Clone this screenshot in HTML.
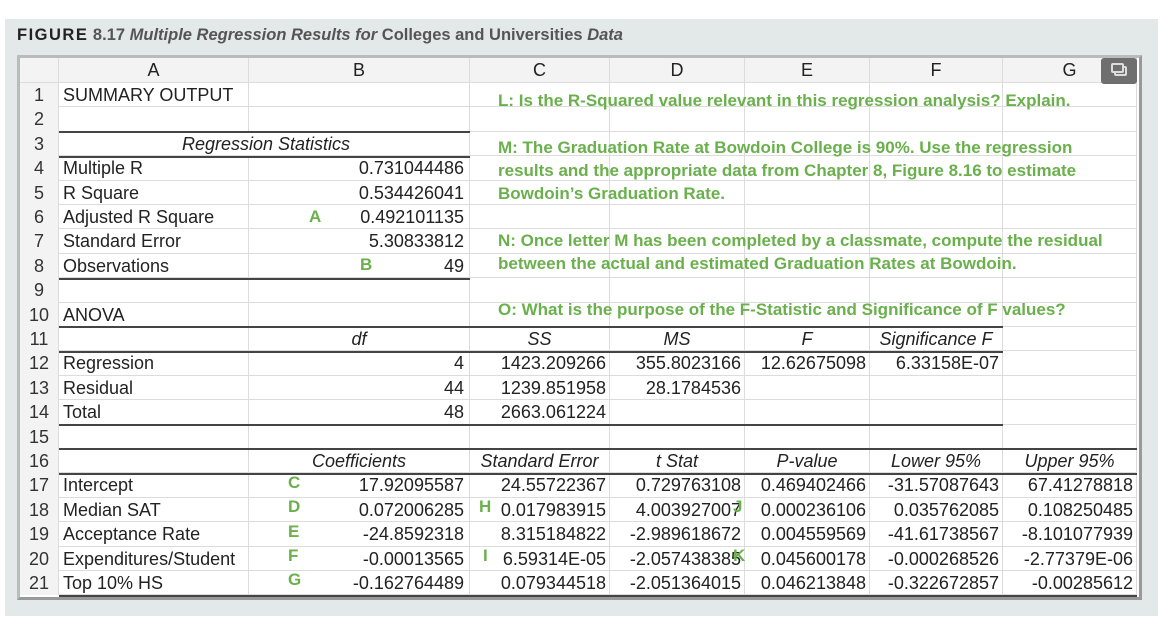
<!DOCTYPE html>
<html><head><meta charset="utf-8"><style>
*{margin:0;padding:0;box-sizing:border-box}
body{width:1170px;height:638px;background:#fff;position:relative;overflow:hidden;font-family:"Liberation Sans",Arial,sans-serif}
#panel{position:absolute;left:5px;top:19px;width:1153px;height:597px;background:#e3e9e8}
#title{position:absolute;left:17px;top:26px;font-size:16.5px;color:#555;white-space:nowrap;font-weight:bold}
#title b{color:#222;letter-spacing:1.5px}
#frame{position:absolute;left:17px;top:55px;width:1125px;height:545px;border:3px solid #bbb;border-right-color:#999;border-bottom-color:#999;background:#fff}
.grid{position:absolute;left:20px;top:58px}
.row{position:absolute;left:0;height:24.4px;width:1117px;border-bottom:1px solid #dcdcdc}
.c{position:absolute;top:0;height:24.4px;line-height:24.4px;font-size:18px;color:#222;white-space:nowrap;border-right:1px solid #dcdcdc;overflow:visible}
.n{left:0;width:39px;text-align:center;background:#f3f3f3;color:#333}
.A{left:39px;width:190px;padding-left:4px}
.B{left:229px;width:221px;padding-right:5px;text-align:right}
.C{left:450px;width:140px;padding-right:3px;text-align:right}
.D{left:590px;width:135px;padding-right:3px;text-align:right}
.E{left:725px;width:125px;padding-right:3px;text-align:right}
.F{left:850px;width:133px;padding-right:3px;text-align:right}
.G{left:983px;width:134px;padding-right:3px;text-align:right}
.hdr .c{text-align:center;background:#f3f3f3;padding:0}
.i{font-style:italic}
.ctr{text-align:center!important;padding:0!important}
.line{position:absolute;height:2px;background:#444}
.g{position:absolute;color:#6ab04c;font-weight:bold;font-size:17px;white-space:nowrap}
</style></head><body>
<div id="panel"></div>
<div id="title"><b>FIGURE</b> 8.17 <i>Multiple Regression Results for</i> Colleges and Universities <i>Data</i></div>
<div id="frame"></div>
<div class="grid">
<div class="row hdr" style="top:0;height:25px"><div class="c n" style="background:#f3f3f3"></div><div class="c A">A</div><div class="c B">B</div><div class="c C">C</div><div class="c D">D</div><div class="c E">E</div><div class="c F">F</div><div class="c G">G</div></div>
<div class="row" style="top:25px"><div class="c n">1</div><div class="c A">SUMMARY OUTPUT</div><div class="c B"></div><div class="c C"></div><div class="c D"></div><div class="c E"></div><div class="c F"></div><div class="c G"></div></div>
<div class="row" style="top:49.4px"><div class="c n">2</div><div class="c A"></div><div class="c B"></div><div class="c C"></div><div class="c D"></div><div class="c E"></div><div class="c F"></div><div class="c G"></div></div>
<div class="row" style="top:73.8px"><div class="c n">3</div><div class="c A i" style="width:411px;text-align:center;border-right:1px solid #dcdcdc">Regression Statistics</div><div class="c C"></div><div class="c D"></div><div class="c E"></div><div class="c F"></div><div class="c G"></div></div>
<div class="row" style="top:98.2px"><div class="c n">4</div><div class="c A">Multiple R</div><div class="c B">0.731044486</div><div class="c C"></div><div class="c D"></div><div class="c E"></div><div class="c F"></div><div class="c G"></div></div>
<div class="row" style="top:122.6px"><div class="c n">5</div><div class="c A">R Square</div><div class="c B">0.534426041</div><div class="c C"></div><div class="c D"></div><div class="c E"></div><div class="c F"></div><div class="c G"></div></div>
<div class="row" style="top:147px"><div class="c n">6</div><div class="c A">Adjusted R Square</div><div class="c B">0.492101135</div><div class="c C"></div><div class="c D"></div><div class="c E"></div><div class="c F"></div><div class="c G"></div></div>
<div class="row" style="top:171.4px"><div class="c n">7</div><div class="c A">Standard Error</div><div class="c B">5.30833812</div><div class="c C"></div><div class="c D"></div><div class="c E"></div><div class="c F"></div><div class="c G"></div></div>
<div class="row" style="top:195.8px"><div class="c n">8</div><div class="c A">Observations</div><div class="c B">49</div><div class="c C"></div><div class="c D"></div><div class="c E"></div><div class="c F"></div><div class="c G"></div></div>
<div class="row" style="top:220.2px"><div class="c n">9</div><div class="c A"></div><div class="c B"></div><div class="c C"></div><div class="c D"></div><div class="c E"></div><div class="c F"></div><div class="c G"></div></div>
<div class="row" style="top:244.6px"><div class="c n">10</div><div class="c A">ANOVA</div><div class="c B"></div><div class="c C"></div><div class="c D"></div><div class="c E"></div><div class="c F"></div><div class="c G"></div></div>
<div class="row" style="top:269px"><div class="c n">11</div><div class="c A"></div><div class="c B i ctr">df</div><div class="c C i ctr">SS</div><div class="c D i ctr">MS</div><div class="c E i ctr">F</div><div class="c F i ctr">Significance F</div><div class="c G"></div></div>
<div class="row" style="top:293.4px"><div class="c n">12</div><div class="c A">Regression</div><div class="c B">4</div><div class="c C">1423.209266</div><div class="c D">355.8023166</div><div class="c E">12.62675098</div><div class="c F">6.33158E-07</div><div class="c G"></div></div>
<div class="row" style="top:317.8px"><div class="c n">13</div><div class="c A">Residual</div><div class="c B">44</div><div class="c C">1239.851958</div><div class="c D">28.1784536</div><div class="c E"></div><div class="c F"></div><div class="c G"></div></div>
<div class="row" style="top:342.2px"><div class="c n">14</div><div class="c A">Total</div><div class="c B">48</div><div class="c C">2663.061224</div><div class="c D"></div><div class="c E"></div><div class="c F"></div><div class="c G"></div></div>
<div class="row" style="top:366.6px"><div class="c n">15</div><div class="c A"></div><div class="c B"></div><div class="c C"></div><div class="c D"></div><div class="c E"></div><div class="c F"></div><div class="c G"></div></div>
<div class="row" style="top:391px"><div class="c n">16</div><div class="c A"></div><div class="c B i ctr">Coefficients</div><div class="c C i ctr">Standard Error</div><div class="c D i ctr">t Stat</div><div class="c E i ctr">P-value</div><div class="c F i ctr">Lower 95%</div><div class="c G i ctr">Upper 95%</div></div>
<div class="row" style="top:415.4px"><div class="c n">17</div><div class="c A">Intercept</div><div class="c B">17.92095587</div><div class="c C">24.55722367</div><div class="c D">0.729763108</div><div class="c E">0.469402466</div><div class="c F">-31.57087643</div><div class="c G">67.41278818</div></div>
<div class="row" style="top:439.8px"><div class="c n">18</div><div class="c A">Median SAT</div><div class="c B">0.072006285</div><div class="c C">0.017983915</div><div class="c D">4.003927007</div><div class="c E">0.000236106</div><div class="c F">0.035762085</div><div class="c G">0.108250485</div></div>
<div class="row" style="top:464.2px"><div class="c n">19</div><div class="c A">Acceptance Rate</div><div class="c B">-24.8592318</div><div class="c C">8.315184822</div><div class="c D">-2.989618672</div><div class="c E">0.004559569</div><div class="c F">-41.61738567</div><div class="c G">-8.101077939</div></div>
<div class="row" style="top:488.6px"><div class="c n">20</div><div class="c A">Expenditures/Student</div><div class="c B">-0.00013565</div><div class="c C">6.59314E-05</div><div class="c D">-2.057438385</div><div class="c E">0.045600178</div><div class="c F">-0.000268526</div><div class="c G">-2.77379E-06</div></div>
<div class="row" style="top:513px"><div class="c n">21</div><div class="c A">Top 10% HS</div><div class="c B">-0.162764489</div><div class="c C">0.079344518</div><div class="c D">-2.051364015</div><div class="c E">0.046213848</div><div class="c F">-0.322672857</div><div class="c G">-0.00285612</div></div>
</div>
<div class="line" style="left:59px;width:411px;top:131px"></div>
<div class="line" style="left:59px;width:411px;top:155.5px"></div>
<div class="line" style="left:59px;width:411px;top:277.5px"></div>
<div class="line" style="left:59px;width:944px;top:326px"></div>
<div class="line" style="left:59px;width:944px;top:350.5px"></div>
<div class="line" style="left:59px;width:944px;top:423.5px"></div>
<div class="line" style="left:59px;width:1078px;top:448px"></div>
<div class="line" style="left:59px;width:1078px;top:472.5px"></div>
<div class="line" style="left:59px;width:1078px;top:594.5px"></div>
<div style="position:absolute;left:1101px;top:58px;width:36px;height:26px;background:#6f6f6f;border-radius:3px"></div>
<div style="position:absolute;left:1114px;top:66px;width:13px;height:10px;border:2px solid #ddd;border-radius:2px"></div>
<div style="position:absolute;left:1111px;top:63px;width:13px;height:10px;border:2px solid #ddd;border-radius:2px;background:#6f6f6f"></div>
<div class="g" style="left:498px;top:91px">L:  Is the R-Squared value relevant in this regression analysis?  Explain.</div>
<div class="g" style="left:498px;top:138px">M:  The Graduation Rate at Bowdoin College is 90%.  Use the regression</div>
<div class="g" style="left:498px;top:161px">results and the appropriate data from Chapter 8, Figure 8.16 to estimate</div>
<div class="g" style="left:498px;top:184px">Bowdoin’s Graduation Rate.</div>
<div class="g" style="left:498px;top:231px">N:  Once letter M has been completed by a classmate, compute the residual</div>
<div class="g" style="left:498px;top:254px">between the actual and estimated Graduation Rates at Bowdoin.</div>
<div class="g" style="left:498px;top:300px">O:  What is the purpose of the F-Statistic and Significance of F values?</div>
<div class="g" style="left:309px;top:207px">A</div>
<div class="g" style="left:360px;top:255px">B</div>
<div class="g" style="left:288px;top:473px">C</div>
<div class="g" style="left:288px;top:497px">D</div>
<div class="g" style="left:288px;top:522px">E</div>
<div class="g" style="left:288px;top:546px">F</div>
<div class="g" style="left:288px;top:570px">G</div>
<div class="g" style="left:479px;top:497px">H</div>
<div class="g" style="left:733px;top:497px">J</div>
<div class="g" style="left:483px;top:546px">I</div>
<div class="g" style="left:733px;top:546px">K</div>
</body></html>
